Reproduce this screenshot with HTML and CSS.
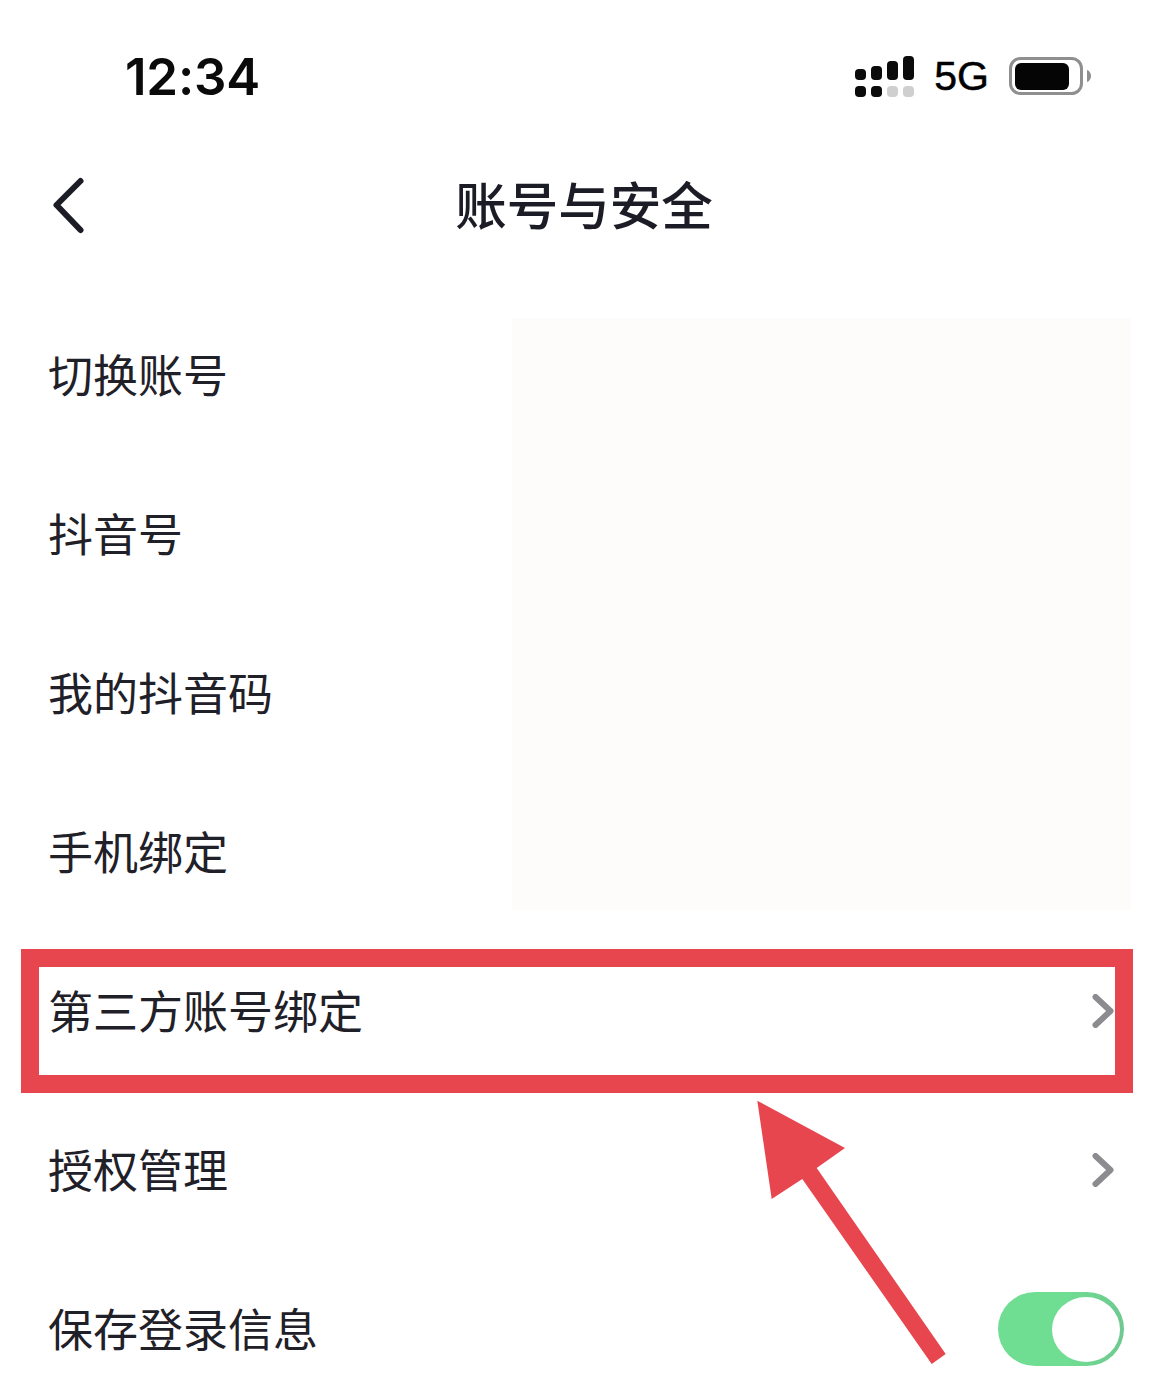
FILE: index.html
```html
<!DOCTYPE html>
<html lang="zh-CN">
<head>
<meta charset="utf-8">
<title>账号与安全</title>
<link rel="stylesheet" href="styles.css">
</head>
<body>
<main class="screen">
  <header class="status">
    <span class="time">12:34</span>
    <div class="status-right">
      <svg class="signal" width="59" height="41" viewBox="0 0 59 41" aria-hidden="true">
        <rect x="0" y="13" width="11" height="11" rx="4" fill="#0b0b0b"/>
        <rect x="16" y="10" width="11" height="14" rx="4" fill="#0b0b0b"/>
        <rect x="32" y="5" width="11" height="19" rx="4" fill="#0b0b0b"/>
        <rect x="48" y="0" width="11" height="24" rx="4" fill="#0b0b0b"/>
        <rect x="0" y="30" width="11" height="11" rx="4" fill="#0b0b0b"/>
        <rect x="16" y="30" width="11" height="11" rx="4" fill="#0b0b0b"/>
        <rect x="32" y="30" width="11" height="11" rx="4" fill="#cfcfcf"/>
        <rect x="48" y="30" width="11" height="11" rx="4" fill="#cfcfcf"/>
      </svg>
      <span class="net">5G</span>
      <svg class="battery" width="82" height="38" viewBox="0 0 82 38" aria-hidden="true">
        <rect x="1.500" y="1.500" width="71" height="35" rx="10" fill="none" stroke="#8f8f8f" stroke-width="3"/>
        <rect x="6" y="6" width="54" height="27" rx="6" fill="#050505"/>
        <path d="M78 13c2.500 .8 4 3 4 6s-1.500 5.200-4 6z" fill="#8f8f8f"/>
      </svg>
    </div>
  </header>

  <nav class="nav">
    <svg class="back" width="40" height="60" viewBox="0 0 40 60" aria-hidden="true">
      <path d="M30.500 5 6.500 29 30.500 54" fill="none" stroke="#1b1c26" stroke-width="6" stroke-linecap="round" stroke-linejoin="round"/>
    </svg>
    <h1 class="title">账号与安全</h1>
  </nav>

  <section class="list">
    <div class="row"><span class="label">切换账号</span></div>
    <div class="row"><span class="label">抖音号</span></div>
    <div class="row"><span class="label">我的抖音码</span></div>
    <div class="row"><span class="label">手机绑定</span></div>
    <div class="row"><span class="label">第三方账号绑定</span>
      <svg class="chevron" width="22" height="34" viewBox="0 0 22 34" aria-hidden="true">
        <path d="M3.500 3 18.500 17 3.500 31" fill="none" stroke="#8b8b90" stroke-width="6" stroke-linecap="round" stroke-linejoin="round"/>
      </svg>
    </div>
    <div class="row"><span class="label">授权管理</span>
      <svg class="chevron" width="22" height="34" viewBox="0 0 22 34" aria-hidden="true">
        <path d="M3.500 3 18.500 17 3.500 31" fill="none" stroke="#8b8b90" stroke-width="6" stroke-linecap="round" stroke-linejoin="round"/>
      </svg>
    </div>
    <div class="row"><span class="label">保存登录信息</span>
      <span class="toggle"><span class="knob"></span></span>
    </div>
  </section>

  <div class="redact"></div>
  <div class="highlight"></div>
  <svg class="arrow" width="200" height="270" viewBox="0 0 200 270" aria-hidden="true">
    <polygon points="7.300,10.700 95,58 66.700,78 195.700,264 181.700,274 52.300,89 21.700,109" fill="#e8464f"/>
  </svg>
</main>
</body>
</html>
```

FILE: styles.css
```css
* {
  box-sizing: border-box;
}

html,
body {
  margin: 0;
  padding: 0;
  background: #ffffff;
}

.screen {
  position: relative;
  width: 1168px;
  height: 1377px;
  overflow: hidden;
  background: #ffffff;
  font-family: "Noto Sans CJK SC", "Liberation Sans", sans-serif;
  color: #1f2028;
}

.status {
  display: flex;
  align-items: center;
  justify-content: space-between;
  height: 152px;
  padding: 0 77px 0 125px;
}

.time {
  font-family: Inter, "Liberation Sans", sans-serif;
  font-size: 51px;
  font-weight: 600;
  line-height: 1;
  color: #0a0a0a;
  letter-spacing: -0.2px;
}

.status-right {
  display: flex;
  align-items: center;
  gap: 20px;
}

.net {
  font-family: "Liberation Sans", sans-serif;
  font-size: 41px;
  line-height: 1;
  color: #000000;
  -webkit-text-stroke: 0.5px #000000;
}

.signal,
.battery,
.back,
.chevron {
  display: block;
  flex: none;
}

.nav {
  position: relative;
  display: flex;
  align-items: center;
  justify-content: center;
  height: 108px;
}

.back {
  position: absolute;
  left: 50px;
  top: 24px;
}

.title {
  margin: 0 0 6px;
  font-size: 51.500px;
  font-weight: 500;
  line-height: 1;
  color: #1b1c26;
}

.list {
  display: flex;
  flex-direction: column;
  padding-top: 35.500px;
}

.row {
  display: flex;
  align-items: center;
  justify-content: space-between;
  height: 159px;
  padding: 0 54px 0 48px;
  font-size: 45px;
  line-height: 1;
}

.label {
  margin-bottom: 4px;
}

.toggle {
  position: relative;
  display: block;
  width: 126px;
  height: 74px;
  margin-right: -10px;
  border-radius: 37px;
  background: linear-gradient(90deg, #6fdd92 55%, #6ec98f);
}

.knob {
  position: absolute;
  right: 4px;
  top: 5px;
  width: 68px;
  height: 65px;
  border-radius: 50%;
  background: #ffffff;
}

.redact {
  position: absolute;
  left: 512px;
  top: 318px;
  width: 619px;
  height: 592px;
  background: #fdfcfb;
}

.highlight {
  position: absolute;
  left: 21px;
  top: 949px;
  width: 1112px;
  height: 144px;
  border: 18px solid #e8464f;
}

.arrow {
  position: absolute;
  left: 750px;
  top: 1090px;
  overflow: visible;
}
```
